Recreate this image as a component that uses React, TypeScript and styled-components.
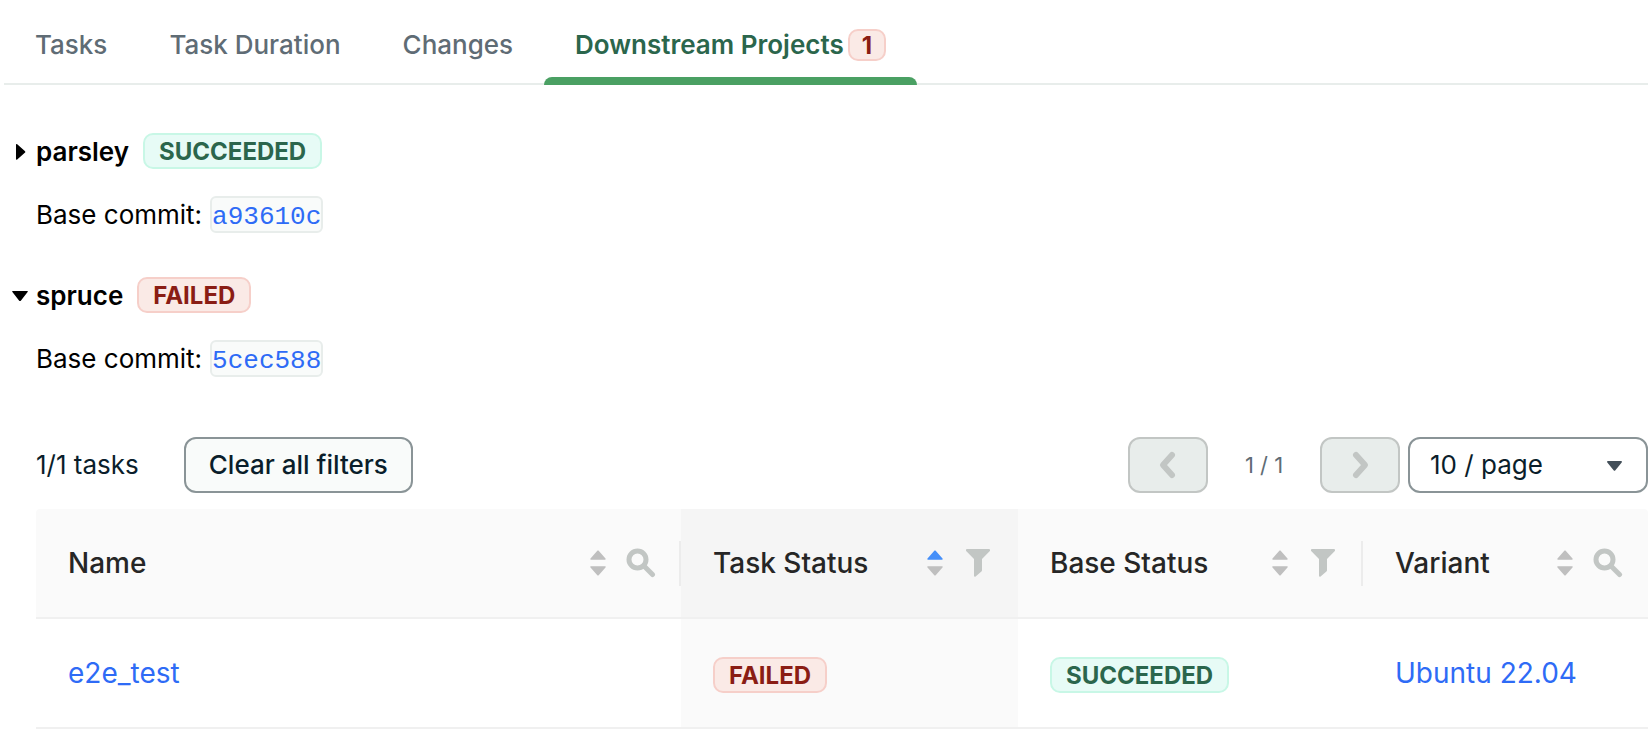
import React, { useState } from "react";
import styled, { createGlobalStyle, css } from "styled-components";

const color = {
  black: "#000000",
  ink: "#0a1e2b",
  heading: "#262626",
  gray: "#5f6c75",
  border: "#8a9497",
  line: "#e8edeb",
  tableLine: "#f0f0f0",
  icon: "#c2c6c4",
  sorter: "#bfbfbf",
  blue: "#2e6bf6",
  sorterActive: "#458ff9",
  green: "#4aa063",
  greenDark: "#2b664c",
};

const GlobalStyle = createGlobalStyle`
  *, *::before, *::after { box-sizing: border-box; }
  body {
    margin: 0;
    background: #ffffff;
    color: ${color.black};
    font-family: Inter, "Liberation Sans", sans-serif;
    font-size: 26px;
    line-height: 40px;
  }
  button, select { font: inherit; }
`;

const Page = styled.main`
  padding: 0 4px;
`;

const TabList = styled.div`
  display: flex;
  height: 85px;
  box-shadow: inset 0 -2px 0 ${color.line};
`;

const Tab = styled.button<{ $active?: boolean }>`
  display: flex;
  align-items: center;
  gap: 4px;
  padding: 5px 31px 0;
  border: 0;
  background: none;
  color: ${color.gray};
  font-weight: 500;
  white-space: nowrap;
  cursor: pointer;
  ${({ $active }) =>
    $active &&
    css`
      position: relative;
      color: ${color.greenDark};
      font-weight: 600;
      &::after {
        content: "";
        position: absolute;
        left: 0;
        right: 0;
        bottom: 0;
        height: 8px;
        border-radius: 8px 8px 0 0;
        background: ${color.green};
      }
    `}
`;

type Tone = "success" | "failure";

const toneStyles = {
  success: css`
    color: ${color.greenDark};
    background: #e7fbf6;
    border-color: #c8f7e6;
  `,
  failure: css`
    color: #8a1d14;
    background: #faeae6;
    border-color: #f6cfc9;
  `,
};

const Badge = styled.span<{ $tone: Tone; $count?: boolean }>`
  display: inline-flex;
  align-items: center;
  justify-content: center;
  height: ${({ $count }) => ($count ? 32 : 36)}px;
  padding: 1px ${({ $count }) => ($count ? 12 : 14)}px 0;
  border: 2px solid;
  border-radius: 10px;
  font-size: 24px;
  font-weight: 700;
  line-height: 32px;
  vertical-align: middle;
  ${({ $tone }) => toneStyles[$tone]}
`;

const Projects = styled.div`
  display: grid;
  gap: 44px;
  padding-top: 48px;
`;

const Project = styled.section`
  display: grid;
  gap: 27px;
  padding-left: 32px;
`;

const ProjectHeader = styled.h2`
  display: flex;
  align-items: center;
  gap: 14px;
  height: 36px;
  margin: 0 0 0 -24px;
  font: inherit;
`;

const Toggle = styled.button`
  display: flex;
  align-items: center;
  gap: 8px;
  padding: 2px 0 0;
  border: 0;
  background: none;
  color: ${color.black};
  font-weight: 600;
  cursor: pointer;
`;

const BaseCommit = styled.p`
  display: flex;
  align-items: center;
  gap: 8px;
  height: 37px;
  margin: 0;
`;

const Hash = styled.a`
  padding: 5px 0 0;
  border: 2px solid ${color.line};
  border-radius: 6px;
  background: #f9fbfa;
  color: ${color.blue};
  font-family: "Liberation Mono", monospace;
  font-size: 26px;
  line-height: 28px;
  text-decoration: none;
`;

const Toolbar = styled.div`
  display: flex;
  align-items: center;
  justify-content: space-between;
  margin-top: 33px;
  color: ${color.ink};
`;

const ToolGroup = styled.div<{ $gap: number }>`
  display: flex;
  align-items: center;
  gap: ${({ $gap }) => $gap}px;
`;

const ClearButton = styled.button`
  height: 56px;
  padding: 0 23px;
  border: 2px solid ${color.border};
  border-radius: 12px;
  background: #f9fbfa;
  color: ${color.ink};
  font-weight: 500;
  line-height: 52px;
  cursor: pointer;
`;

const PageButton = styled.button`
  display: flex;
  align-items: center;
  justify-content: center;
  width: 80px;
  height: 56px;
  padding: 0;
  border: 2px solid ${color.icon};
  border-radius: 12px;
  background: ${color.line};
  color: ${color.icon};
`;

const PageCount = styled.span`
  width: 96px;
  color: ${color.gray};
  font-size: 22px;
  text-align: center;
`;

const SelectBox = styled.div`
  position: relative;
  width: 240px;
  svg {
    position: absolute;
    top: 24px;
    right: 26px;
    pointer-events: none;
  }
`;

const PageSize = styled.select`
  appearance: none;
  display: block;
  width: 100%;
  height: 56px;
  padding: 0 20px;
  border: 2px solid ${color.border};
  border-radius: 12px;
  background: #ffffff;
  color: ${color.ink};
`;

const TaskTable = styled.table`
  width: 100%;
  margin-top: -11px;
  border-collapse: separate;
  border-spacing: 0;
  table-layout: fixed;
  font-size: 28px;
`;

const Column = styled.col<{ $width?: number }>`
  width: ${({ $width }) => ($width ? `${$width}px` : "auto")};
`;

const HeaderCell = styled.th<{ $sorted?: boolean; $divider?: boolean }>`
  height: 110px;
  padding: 0 24px 0 32px;
  border-bottom: 2px solid ${color.tableLine};
  background: ${({ $sorted }) => ($sorted ? "#f5f5f5" : "#fafafa")};
  color: ${color.heading};
  font-weight: 500;
  text-align: left;
  ${({ $divider }) =>
    $divider &&
    css`
      background-image: linear-gradient(#ececec, #ececec);
      background-position: right center;
      background-repeat: no-repeat;
      background-size: 2px 45px;
    `}
  &:first-child { border-top-left-radius: 4px; }
  &:last-child { border-top-right-radius: 4px; }
`;

const HeaderContent = styled.div`
  display: flex;
  align-items: center;
  justify-content: space-between;
  white-space: nowrap;
`;

const HeaderTools = styled.span`
  display: flex;
  align-items: center;
  gap: 19px;
`;

const IconButton = styled.button<{ $wide?: boolean }>`
  display: flex;
  align-items: center;
  justify-content: center;
  width: ${({ $wide }) => ($wide ? 32 : 16)}px;
  padding: 0;
  border: 0;
  background: none;
  color: ${color.icon};
  cursor: pointer;
`;

const Cell = styled.td<{ $sorted?: boolean }>`
  height: 110px;
  padding: 0 32px;
  border-bottom: 2px solid ${color.tableLine};
  background: ${({ $sorted }) => ($sorted ? "#fafafa" : "#ffffff")};
  white-space: nowrap;
`;

const TextLink = styled.a`
  color: ${color.blue};
  text-decoration: none;
`;

const ToggleIcon = ({ open }: { open: boolean }) => (
  <svg width="16" height="18" viewBox="0 0 16 18" fill="currentColor" aria-hidden="true">
    {open ? (
      <path d="M1 4h14c.8 0 1 .6.6 1.1L9 13.4c-.6.7-1.4.7-2 0L.4 5.1C0 4.600 .2 4 1 4Z" />
    ) : (
      <path d="M4 1.800c0-.8.6-1 1.200-.5l7.600 6.600c.7.6.7 1.300 0 1.900l-7.600 6.600c-.6.500-1.200.3-1.200-.5Z" />
    )}
  </svg>
);

const Chevron = ({ direction }: { direction: "left" | "right" }) => (
  <svg
    width="20"
    height="30"
    viewBox="0 0 20 30"
    fill="none"
    stroke="currentColor"
    strokeWidth="6"
    strokeLinecap="round"
    strokeLinejoin="round"
    aria-hidden="true"
  >
    <path d={direction === "left" ? "M14 5 5 15l9 10" : "M6 5 15 15 6 25"} />
  </svg>
);

const Caret = () => (
  <svg width="15" height="10" viewBox="0 0 15 10" fill="#434f59" aria-hidden="true">
    <path d="M1 0h13c.9 0 1.300.7.7 1.400L8.400 9.300c-.5.7-1.300.7-1.800 0L.3 1.400C-.3.7.1 0 1 0Z" />
  </svg>
);

const Sorter = ({ ascending }: { ascending?: boolean }) => (
  <svg width="16" height="26" viewBox="0 0 16 26" aria-hidden="true">
    <path
      d="M7.300.8.5 8.500c-.5.6-.2 1.200.5 1.200h14c.7 0 1-.6.500-1.200L8.700.8c-.4-.5-1-.5-1.400 0Z"
      fill={ascending ? color.sorterActive : color.sorter}
    />
    <path
      d="M7.300 25.200.5 17.500c-.5-.6-.2-1.200.5-1.200h14c.7 0 1 .6.500 1.200l-6.800 7.700c-.4.500-1 .5-1.400 0Z"
      fill={color.sorter}
    />
  </svg>
);

const SearchIcon = () => (
  <svg width="30" height="30" viewBox="0 0 30 30" fill="none" stroke="currentColor" aria-hidden="true">
    <circle cx="11.500" cy="11.500" r="8.500" strokeWidth="5" />
    <path d="m18 18 8.500 8.500" strokeWidth="5" strokeLinecap="round" />
  </svg>
);

const FilterIcon = () => (
  <svg width="24" height="28" viewBox="0 0 24 28" fill="currentColor" aria-hidden="true">
    <path d="M1.200 0h21.600c1.200 0 1.600 1.400.8 2.200L16 10v11.300c0 .5-.2.9-.6 1.200l-5.800 5c-.7.600-1.600.2-1.600-.7V10L.4 2.200C-.4 1.400 0 0 1.200 0Z" />
  </svg>
);

type ColumnInfo = {
  title: string;
  width?: number;
  tool: "search" | "filter";
  sorted?: boolean;
  divider?: boolean;
};

const columns: ColumnInfo[] = [
  { title: "Name", tool: "search", divider: true },
  { title: "Task Status", width: 337, tool: "filter", sorted: true },
  { title: "Base Status", width: 345, tool: "filter", divider: true },
  { title: "Variant", width: 285, tool: "search" },
];

const tabs = ["Tasks", "Task Duration", "Changes", "Downstream Projects"];

type ProjectProps = {
  name: string;
  status: string;
  tone: Tone;
  commit: string;
  defaultOpen?: boolean;
  children?: React.ReactNode;
};

const DownstreamProject = ({ name, status, tone, commit, defaultOpen = false, children }: ProjectProps) => {
  const [open, setOpen] = useState(defaultOpen);
  return (
    <Project>
      <ProjectHeader>
        <Toggle type="button" aria-expanded={open} onClick={() => setOpen(!open)}>
          <ToggleIcon open={open} />
          {name}
        </Toggle>
        <Badge $tone={tone}>{status}</Badge>
      </ProjectHeader>
      <BaseCommit>
        Base commit: <Hash href={`#${commit}`}>{commit}</Hash>
      </BaseCommit>
      {open && children}
    </Project>
  );
};

const Tasks = () => (
  <>
    <Toolbar>
      <ToolGroup $gap={45}>
        <span>1/1 tasks</span>
        <ClearButton type="button">Clear all filters</ClearButton>
      </ToolGroup>
      <ToolGroup $gap={8}>
        <ToolGroup $gap={8}>
          <PageButton type="button" aria-label="Previous page" disabled>
            <Chevron direction="left" />
          </PageButton>
          <PageCount>1 / 1</PageCount>
          <PageButton type="button" aria-label="Next page" disabled>
            <Chevron direction="right" />
          </PageButton>
        </ToolGroup>
        <SelectBox>
          <PageSize aria-label="Page size" defaultValue="10">
            <option value="10">10 / page</option>
            <option value="20">20 / page</option>
            <option value="50">50 / page</option>
          </PageSize>
          <Caret />
        </SelectBox>
      </ToolGroup>
    </Toolbar>
    <TaskTable>
      <colgroup>
        {columns.map(({ title, width }) => (
          <Column key={title} $width={width} />
        ))}
      </colgroup>
      <thead>
        <tr>
          {columns.map(({ title, tool, sorted, divider }) => (
            <HeaderCell key={title} scope="col" $sorted={sorted} $divider={divider}>
              <HeaderContent>
                {title}
                <HeaderTools>
                  <IconButton type="button" aria-label={`Sort by ${title}`}>
                    <Sorter ascending={sorted} />
                  </IconButton>
                  <IconButton type="button" $wide aria-label={`${tool} ${title}`}>
                    {tool === "search" ? <SearchIcon /> : <FilterIcon />}
                  </IconButton>
                </HeaderTools>
              </HeaderContent>
            </HeaderCell>
          ))}
        </tr>
      </thead>
      <tbody>
        <tr>
          <Cell>
            <TextLink href="#e2e_test">e2e_test</TextLink>
          </Cell>
          <Cell $sorted>
            <Badge $tone="failure">FAILED</Badge>
          </Cell>
          <Cell>
            <Badge $tone="success">SUCCEEDED</Badge>
          </Cell>
          <Cell>
            <TextLink href="#ubuntu">Ubuntu 22.04</TextLink>
          </Cell>
        </tr>
      </tbody>
    </TaskTable>
  </>
);

export default function App() {
  const [active, setActive] = useState("Downstream Projects");
  return (
    <Page>
      <GlobalStyle />
      <TabList role="tablist">
        {tabs.map((tab) => (
          <Tab
            key={tab}
            type="button"
            role="tab"
            aria-selected={tab === active}
            $active={tab === active}
            onClick={() => setActive(tab)}
          >
            {tab}
            {tab === "Downstream Projects" && (
              <Badge $tone="failure" $count>
                1
              </Badge>
            )}
          </Tab>
        ))}
      </TabList>
      <Projects>
        <DownstreamProject name="parsley" status="SUCCEEDED" tone="success" commit="a93610c" />
        <DownstreamProject name="spruce" status="FAILED" tone="failure" commit="5cec588" defaultOpen>
          <Tasks />
        </DownstreamProject>
      </Projects>
    </Page>
  );
}
